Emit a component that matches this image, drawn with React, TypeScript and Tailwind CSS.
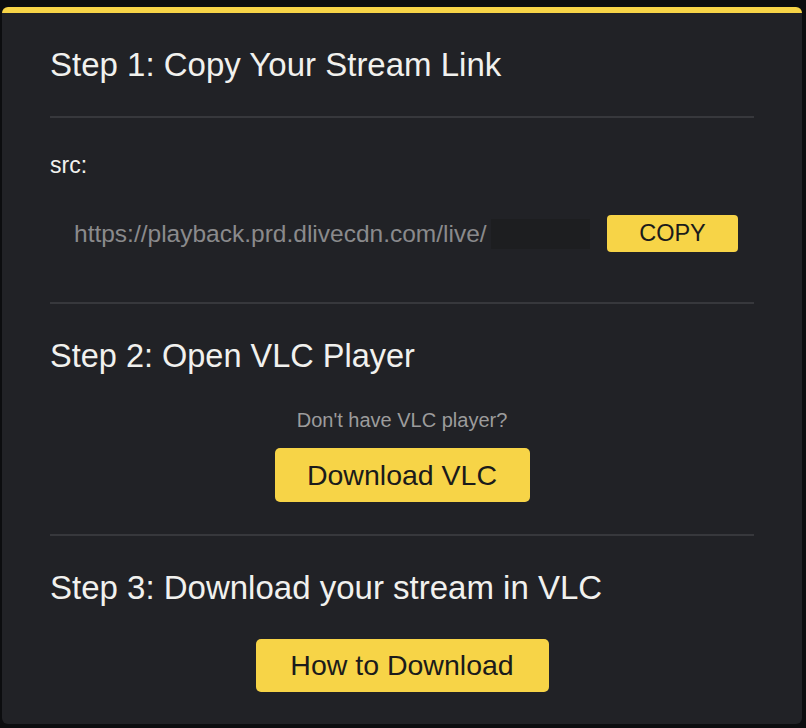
import React from "react";

export default function App() {
  const font = { fontFamily: '"Liberation Sans", Arial, Helvetica, sans-serif' };
  return (
    <div
      className="relative w-[806px] h-[728px] bg-[#0c0d0f] overflow-hidden pt-[7px] pl-[2px]"
      style={font}
    >
      <div className="relative w-[800px] rounded-[6px] overflow-hidden bg-[#212226] border-t-[6px] border-[#f7d447] px-[48px] pt-[32px] pb-[32px] flex flex-col">
        <h2 className="h-[40px] leading-[40px] text-[33px] text-[#f1f1ee] font-normal whitespace-nowrap">
          Step 1: Copy Your Stream Link
        </h2>
        <div className="mt-[31px] h-[2px] bg-[#37383c]" />
        <div className="mt-[33px] h-[28px] leading-[28px] text-[23px] text-[#f1f1ee]">src:</div>
        <div className="mt-[36px] h-[37px] flex items-center">
          <div className="ml-[24px] w-[516px] h-[37px] flex items-center overflow-hidden">
            <span className="text-[24.5px] leading-[37px] text-[#8a8a8c] whitespace-nowrap">
              https://playback.prd.dlivecdn.com/live/
            </span>
            <span className="ml-[4px] flex-1 h-[30px] bg-[#1d1e20]" />
          </div>
          <button className="ml-[17px] w-[131px] h-[37px] rounded-[4px] bg-[#f7d447] text-[#1b1b1b] text-[23.5px] leading-[37px] text-center">
            COPY
          </button>
        </div>
        <div className="mt-[50px] h-[2px] bg-[#37383c]" />
        <h2 className="mt-[32px] h-[40px] leading-[40px] text-[32.5px] text-[#f1f1ee] font-normal whitespace-nowrap">
          Step 2: Open VLC Player
        </h2>
        <div className="mt-[32px] h-[24px] leading-[24px] text-[20px] text-[#9c9c9c] text-center">
          Don't have VLC player?
        </div>
        <div className="mt-[16px] flex justify-center">
          <button className="w-[255px] h-[54px] rounded-[5px] bg-[#f7d447] text-[#1b1b1b] text-[28.5px] leading-[54px] text-center">
            Download VLC
          </button>
        </div>
        <div className="mt-[32px] h-[2px] bg-[#37383c]" />
        <h2 className="mt-[32px] h-[40px] leading-[40px] text-[33px] text-[#f1f1ee] font-normal whitespace-nowrap">
          Step 3: Download your stream in VLC
        </h2>
        <div className="mt-[31px] flex justify-center">
          <button className="w-[293px] h-[53px] rounded-[5px] bg-[#f7d447] text-[#1b1b1b] text-[28.5px] leading-[53px] text-center">
            How to Download
          </button>
        </div>
      </div>
    </div>
  );
}
